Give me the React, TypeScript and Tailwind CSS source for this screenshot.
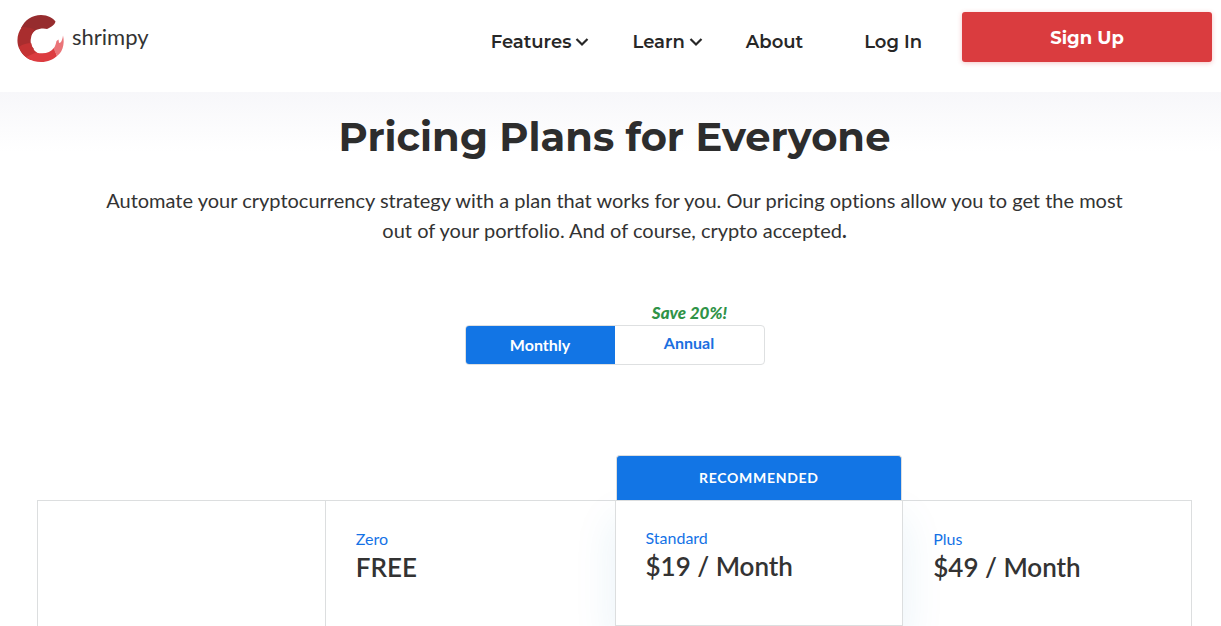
function Chevron() {
  return (
    <svg viewBox="0 0 14 10" className="h-[10px] w-[14px]" fill="none" aria-hidden="true">
      <path d="M1.500 2L7 7.500L12.500 2" stroke="currentColor" strokeWidth="2.200" />
    </svg>
  );
}

const plans = [
  { name: "Zero", price: "FREE" },
  { name: "Standard", price: "$19 / Month", recommended: true },
  { name: "Plus", price: "$49 / Month" },
];

function Logo() {
  return (
    <a href="#home" aria-label="shrimpy" className="flex items-center gap-2 pt-[15px]">
      <svg viewBox="0 0 47 47" className="size-[47px]" aria-hidden="true">
        <path d="M4 13C8 5 15 0 24 0C31 0 36 3 38.500 6.500C37.500 10.500 33 12.500 30 14C27 13 22 13.500 19 15C16 17 14.500 19 13.500 22L9 16Z" fill="#962c2e" />
        <path d="M5 12C0 18-1 28 2.500 34C4 38 7 40.500 9 42L17 34C14 31 13 27 14 23C14.500 19 16 17 18 15C13 12 8 12 5 12Z" fill="#a92d2e" />
        <path d="M2 32C4 38 9 43.500 14 45L20 37.500C17 36 15 33 14.200 28C10 28 6 29 2 32Z" fill="#c43233" />
        <path d="M9 42C14 46 19 47 24 47C31 47 36 44.500 40 41L37 33C33 38 27 39.500 19 37.500Z" fill="#dc3c40" />
        <path d="M36.500 33.500C38.500 31 38.800 28.500 39.500 26L41.500 24.500L42 28L43.500 27.500C45 26 45.500 23.500 46 20.500C47 25 47 29 45.500 33.500C44 37.500 42 39.500 40 41Z" fill="#ea7478" />
      </svg>
      <span className="pb-1 font-['Lato',sans-serif] text-[22px] leading-7 text-[#333]">shrimpy</span>
    </a>
  );
}

function Header() {
  return (
    <header className="flex h-[92px] items-start justify-between bg-white pr-[9px] pl-[17px]">
      <Logo />
      <div className="flex items-start gap-10 pt-3 font-['Montserrat','Inter',sans-serif] text-lg text-[#272727]">
        <nav className="flex h-[60px] items-center gap-[43px] font-semibold">
          <button type="button" className="flex items-center gap-1">
            Features
            <Chevron />
          </button>
          <button type="button" className="flex items-center gap-1">
            Learn
            <Chevron />
          </button>
          <a href="#about">About</a>
          <a href="#login" className="pl-[18px]">Log In</a>
        </nav>
        <a
          href="#signup"
          className="flex h-[50px] w-[250px] items-center justify-center rounded-[3px] bg-[#da3c3f] pt-px font-bold text-white shadow-[0_1px_5px_rgba(218,60,63,0.3)]"
        >
          Sign Up
        </a>
      </div>
    </header>
  );
}

function BillingToggle() {
  return (
    <div className="mx-auto mt-14 w-[300px] text-base">
      <p className="ml-[150px] text-center text-[17px] leading-6 font-black text-[#2f9347] italic">
        Save 20%!
      </p>
      <div className="flex h-10 rounded border border-[#dee0e1] bg-white">
        <button type="button" aria-pressed="true" className="flex-1 rounded-l-[3px] bg-[#1275e5] font-bold text-white">
          Monthly
        </button>
        <button type="button" aria-pressed="false" className="flex-1 pb-1 font-bold text-[#1b6fe0]">
          Annual
        </button>
      </div>
    </div>
  );
}

function PlanTable() {
  return (
    <table className="mt-[135px] w-full table-fixed border-separate border-spacing-0 text-left">
      <thead>
        <tr>
          <td className="h-[126px] border-x border-t border-[#dcdedf]" />
          {plans.map((plan) => (
            <th
              key={plan.name}
              scope="col"
              className={
                plan.recommended
                  ? "relative z-10 h-[126px] border border-[#dcdedf] bg-white px-[30px] pt-[25px] align-top shadow-[0_20px_40px_rgba(30,130,190,0.1)]"
                  : "h-[126px] border-t border-[#dcdedf] px-[30px] pt-[26px] align-top last:border-r"
              }
            >
              {plan.recommended && (
                <span className="absolute inset-x-0 bottom-full mb-px flex h-[45px] items-center justify-center rounded-t border border-b-0 border-[#dcdedf] bg-[#1275e5] text-sm font-bold tracking-wider text-white">
                  RECOMMENDED
                </span>
              )}
              <span className="block text-base leading-6 font-normal text-[#1472e6]">{plan.name}</span>
              <span className="block text-[26px] leading-8 font-semibold text-[#333]">{plan.price}</span>
            </th>
          ))}
        </tr>
      </thead>
    </table>
  );
}

export default function App() {
  return (
    <div className="bg-white font-['Lato',sans-serif] text-[#333] [font-variant-ligatures:none]">
      <Header />
      <main className="bg-linear-to-b from-[#f7f7fa] to-white to-[60px] pt-5 pr-[29px] pl-[37px]">
        <h1 className="text-center font-['Montserrat','Inter',sans-serif] text-[40px] leading-[50px] font-bold text-[#2d2d2d]">
          Pricing Plans for Everyone
        </h1>
        <p className="mx-auto mt-[23px] max-w-[1050px] text-center text-xl leading-[30px]">
          Automate your cryptocurrency strategy with a plan that works for you. Our pricing options allow you to get the
          most out of your portfolio. And of course, crypto accepted<b>.</b>
        </p>
        <BillingToggle />
        <PlanTable />
      </main>
    </div>
  );
}
